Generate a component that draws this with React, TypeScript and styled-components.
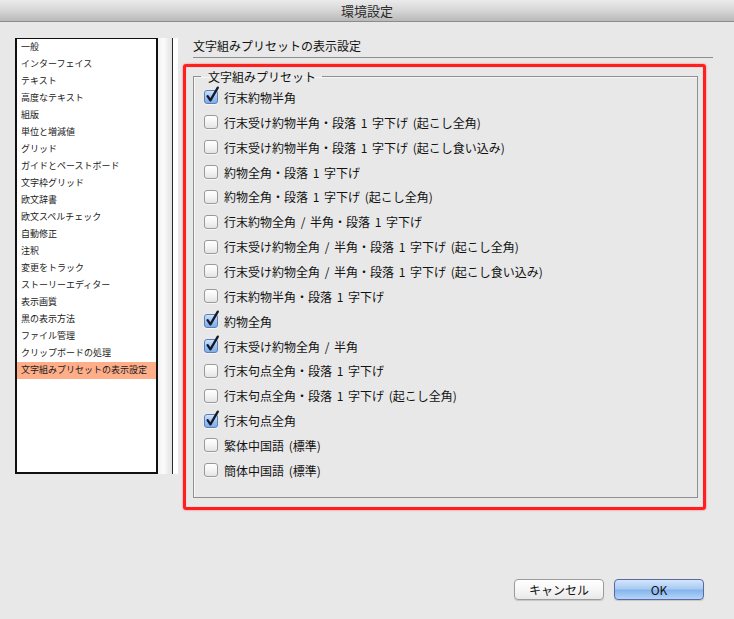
import styled, { createGlobalStyle } from "styled-components";

const GlobalStyle = createGlobalStyle`
  html, body {
    margin: 0;
    padding: 0;
    background: #e8e8e8;
  }
  body {
    font-family: "Noto Sans CJK JP", "Liberation Sans", sans-serif;
    color: #111;
  }
`;

const Window = styled.div`
  width: 734px;
  height: 619px;
  display: flex;
  flex-direction: column;
  background: #e8e8e8;
  overflow: hidden;
`;

const TitleBar = styled.div`
  height: 22px;
  box-sizing: border-box;
  display: flex;
  align-items: center;
  justify-content: center;
  background: linear-gradient(to bottom, #ebebeb 0%, #d6d6d6 50%, #b9b9b9 100%);
  border-bottom: 1px solid #8c8c8c;
  font-size: 13px;
  color: #2a2a2a;
`;

const Content = styled.div`
  flex: 1;
  display: flex;
  align-items: flex-start;
  padding: 16px 0 0 15px;
`;

const Sidebar = styled.div`
  display: flex;
  height: 436px;
  background: #fff;
  padding-right: 5px;
`;

const List = styled.ul`
  width: 139px;
  margin: 0;
  padding: 0;
  list-style: none;
  border: 2px solid #111;
  border-top-width: 1px;
  background: #fff;
`;

const ListItem = styled.li<{ $selected?: boolean }>`
  height: 17px;
  line-height: 16px;
  padding-left: 4px;
  font-size: 9px;
  color: #1a1a1a;
  white-space: nowrap;
  background: ${p => (p.$selected ? "#ffae8a" : "transparent")};
`;

const Track = styled.div`
  width: 14px;
  background: linear-gradient(to right, #f2f2f2 0%, #fbfbfb 40%, #e2e2e2 100%);
  border-right: 1px solid #2a2a2a;
`;

const Main = styled.div`
  margin-left: 5px;
  display: flex;
  flex-direction: column;
`;

const Heading = styled.div`
  margin-left: 10px;
  font-size: 12px;
  line-height: 16px;
  padding-bottom: 3px;
  width: 520px;
  border-bottom: 1px solid #8e8e8e;
`;

const Highlight = styled.div`
  margin-top: 6px;
  width: 523px;
  height: 446px;
  box-sizing: border-box;
  border: 3px solid #ff1f1f;
  border-radius: 3px;
  box-shadow: 0 0 2px #ff5a5a, inset 0 0 1px #ff7070;
  padding: 0 5px 0 7px;
`;

const Group = styled.fieldset`
  margin: 1px 0 0 0;
  padding: 0 0 0 10px;
  height: 430px;
  box-sizing: border-box;
  border: 1px solid #8f8f8f;
  box-shadow: inset 1px 1px 0 #f7f7f7;
  min-inline-size: 0;
`;

const Legend = styled.legend`
  margin-left: -3px;
  padding: 0 6px 0 7px;
  font-size: 12px;
  line-height: 17px;
  color: #111;
`;

const Row = styled.label`
  height: 24.87px;
  display: flex;
  align-items: center;
  gap: 6px;
  font-size: 12px;
  word-spacing: 2px;
  color: #111;
  white-space: nowrap;
`;

const Box = styled.span<{ $checked?: boolean }>`
  position: relative;
  display: inline-block;
  width: 14px;
  height: 14px;
  box-sizing: border-box;
  border-radius: 3px;
  border: 1px solid ${p => (p.$checked ? "#5b7fb8" : "#9a9a9a")};
  background: ${p =>
    p.$checked
      ? "linear-gradient(to bottom, #cfe2fa 0%, #9fc3f1 50%, #7eaeea 100%)"
      : "linear-gradient(to bottom, #ffffff 0%, #f4f4f4 50%, #e4e4e4 100%)"};
  box-shadow: 0 1px 0 rgba(255, 255, 255, 0.6);
  flex-shrink: 0;
`;

const Tick = styled.svg`
  position: absolute;
  left: 0px;
  top: -4px;
  width: 14px;
  height: 16px;
  overflow: visible;
`;

const Footer = styled.div`
  display: flex;
  justify-content: flex-end;
  gap: 10px;
  padding: 0 30px 19px 0;
`;

const Button = styled.button<{ $primary?: boolean }>`
  width: 90px;
  height: 21px;
  padding: 0;
  font-family: "Noto Sans CJK JP", "Liberation Sans", sans-serif;
  font-size: 12px;
  color: #111;
  border-radius: 4px;
  border: 1px solid ${p => (p.$primary ? "#5a6aa0" : "#9c9c9c")};
  background: ${p =>
    p.$primary
      ? "linear-gradient(to bottom, #d4e5fb 0%, #a9cbf3 45%, #86b5ee 55%, #b4d5f8 100%)"
      : "linear-gradient(to bottom, #ffffff 0%, #f6f6f6 50%, #e9e9e9 100%)"};
  box-shadow: 0 1px 1px rgba(0, 0, 0, 0.15);
`;

const categories = [
  "一般",
  "インターフェイス",
  "テキスト",
  "高度なテキスト",
  "組版",
  "単位と増減値",
  "グリッド",
  "ガイドとペーストボード",
  "文字枠グリッド",
  "欧文辞書",
  "欧文スペルチェック",
  "自動修正",
  "注釈",
  "変更をトラック",
  "ストーリーエディター",
  "表示画質",
  "黒の表示方法",
  "ファイル管理",
  "クリップボードの処理",
  "文字組みプリセットの表示設定",
];

const presets: { label: string; checked: boolean }[] = [
  { label: "行末約物半角", checked: true },
  { label: "行末受け約物半角・段落 1 字下げ (起こし全角)", checked: false },
  { label: "行末受け約物半角・段落 1 字下げ (起こし食い込み)", checked: false },
  { label: "約物全角・段落 1 字下げ", checked: false },
  { label: "約物全角・段落 1 字下げ (起こし全角)", checked: false },
  { label: "行末約物全角 / 半角・段落 1 字下げ", checked: false },
  { label: "行末受け約物全角 / 半角・段落 1 字下げ (起こし全角)", checked: false },
  { label: "行末受け約物全角 / 半角・段落 1 字下げ (起こし食い込み)", checked: false },
  { label: "行末約物半角・段落 1 字下げ", checked: false },
  { label: "約物全角", checked: true },
  { label: "行末受け約物全角 / 半角", checked: true },
  { label: "行末句点全角・段落 1 字下げ", checked: false },
  { label: "行末句点全角・段落 1 字下げ (起こし全角)", checked: false },
  { label: "行末句点全角", checked: true },
  { label: "繁体中国語 (標準)", checked: false },
  { label: "簡体中国語 (標準)", checked: false },
];

const Checkbox = ({ checked }: { checked: boolean }) => (
  <Box $checked={checked}>
    {checked && (
      <Tick viewBox="0 0 14 16">
        <path
          d="M2.6 9.2 L5.4 13.4 L12.8 0.6"
          fill="none"
          stroke="#14182a"
          strokeWidth="2.3"
          strokeLinecap="round"
          strokeLinejoin="round"
        />
      </Tick>
    )}
  </Box>
);

const App = () => {
  return (
    <>
      <GlobalStyle />
      <Window>
        <TitleBar>環境設定</TitleBar>
        <Content>
          <Sidebar>
            <List>
              {categories.map((c, i) => (
                <ListItem key={c} $selected={i === categories.length - 1}>
                  {c}
                </ListItem>
              ))}
            </List>
            <Track />
          </Sidebar>
          <Main>
            <Heading>文字組みプリセットの表示設定</Heading>
            <Highlight>
              <Group>
                <Legend>文字組みプリセット</Legend>
                {presets.map(p => (
                  <Row key={p.label}>
                    <Checkbox checked={p.checked} />
                    {p.label}
                  </Row>
                ))}
              </Group>
            </Highlight>
          </Main>
        </Content>
        <Footer>
          <Button>キャンセル</Button>
          <Button $primary>OK</Button>
        </Footer>
      </Window>
    </>
  );
};

export default App;
